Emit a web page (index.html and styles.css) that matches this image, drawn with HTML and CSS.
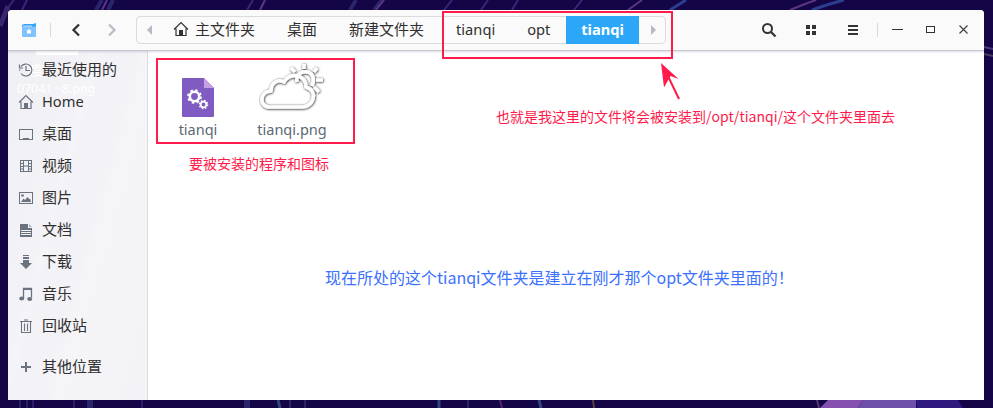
FILE: index.html
```html
<!DOCTYPE html>
<html lang="zh-CN">
<head>
<meta charset="utf-8">
<title>tianqi</title>
<link rel="stylesheet" href="styles.css">
</head>
<body>
<svg class="wallpaper" viewBox="0 0 993 408" aria-hidden="true">
  <rect width="993" height="408" fill="#140547"/>
  <g fill="none" stroke-width="2">
    <path d="M6 10L14 0M22 10L27 0M247 10L253 0M444 10L452 0M481 10L488 0M574 10L582 0M512 10L518 0" stroke="#3c2676"/>
    <path d="M96 10L102 0M108 10L113 0M374 10L382 0M350 10L356 0" stroke="#29266e" stroke-width="4"/>
    <path d="M102 10L107 0M260 10L265 0M376 10L384 0M628 10L642 0M790 10Q804 4 816 0" stroke="#5d3587"/>
    <path d="M670 10L686 0M812 10Q828 4 844 0" stroke="#2b3d8d" stroke-width="3"/>
    <path d="M0 26L8 6" stroke="#38236c" stroke-width="5"/>
    <path d="M984 47L993 49" stroke="#493a78"/><path d="M984 54L993 56" stroke="#493a60"/>
    <path d="M20 400V408M27 400V408M33 400V408M74 400V408M142 400V408" stroke="#2b1d69"/>
    <path d="M90 400V408M247 400V408" stroke="#2a2469" stroke-width="6"/>
    <path d="M278 400L280 408M439 400V408M539 400L541 408" stroke="#324581" stroke-width="3"/>
    <path d="M290 400V408M305 400V408M468 400V408" stroke="#2b2163"/>
    <path d="M500 400L502 408" stroke="#542567"/><path d="M593 400L594 408" stroke="#59413c"/>
    <path d="M817 400L819 408" stroke="#54366f"/>
  </g>
  <path d="M828 400H863L858 408H820Z" fill="#8650b1"/>
  <path d="M863 400H916V408H858Z" fill="#6d50aa"/>
  <path d="M916 400H958L963 408H917Z" fill="#2e1a7e"/>
</svg>

<main class="window">
  <header class="titlebar">
    <svg class="app-icon" viewBox="0 0 16 16"><path d="M1 3L3 2H12L15 1V5H1Z" fill="#32a4f4"/><path d="M2 3.500H11V5H2Z" fill="#b5deff"/><rect x="1" y="4.500" width="14" height="10.500" rx="1" fill="#7fc2ff"/><path d="M8 7L10.500 9H10V11.500H6V9H5.500Z" fill="#fff"/></svg>
    <i class="divider"></i>
    <svg class="nav-icon back" viewBox="0 0 12 14"><path d="M9 1.500L3.500 7L9 12.500"/></svg>
    <svg class="nav-icon forward" viewBox="0 0 12 14"><path d="M3 1.500L8.500 7L3 12.500"/></svg>
    <nav class="pathbar">
      <svg class="path-arrow" viewBox="0 0 6 10"><path d="M5 0V10L0 5Z"/></svg>
      <a class="crumb home"><svg viewBox="0 0 16 16"><path d="M1 8.500L8 1.500L15 8.500M3 7.500V14.500H13V7.500" fill="none" stroke="#333" stroke-width="1.200"/><path d="M6 9H10V14H6Z" fill="#333"/></svg>主文件夹</a>
      <a class="crumb desk">桌面</a>
      <a class="crumb fresh">新建文件夹</a>
      <a class="crumb first">tianqi</a>
      <a class="crumb opt">opt</a>
      <a class="crumb active">tianqi</a>
      <svg class="path-arrow right" viewBox="0 0 6 10"><path d="M1 0V10L6 5Z"/></svg>
    </nav>
    <div class="controls">
      <svg viewBox="0 0 16 16"><circle cx="6.500" cy="6.500" r="4.500" fill="none" stroke="#333" stroke-width="2"/><path d="M10 10L14.500 14.500" stroke="#333" stroke-width="2.300"/></svg>
      <svg viewBox="0 0 16 16" fill="#333"><path d="M3 3H7V7H3ZM9 3H13V7H9ZM3 9H7V13H3ZM9 9H13V13H9Z"/></svg>
      <svg viewBox="0 0 16 16" fill="#333"><path d="M3 3H13V5H3ZM3 7H13V9H3ZM3 11H13V13H3Z"/></svg>
    </div>
    <i class="divider end"></i>
    <div class="window-buttons">
      <svg viewBox="0 0 12 12"><path d="M1 5.500H12" stroke="#333"/></svg>
      <svg viewBox="0 0 12 12"><rect x="2.500" y="2.500" width="8" height="6" fill="none" stroke="#333"/></svg>
      <svg viewBox="0 0 12 12"><path d="M2.500 1.500L10.500 9.500M10.500 1.500L2.500 9.500" stroke="#444" stroke-width="1.200"/></svg>
    </div>
  </header>
  <div class="body">
    <aside class="sidebar">
      <div class="ghost" aria-hidden="true"><i></i><b>度</b><span>07041···8.png</span></div>
      <a class="place"><svg viewBox="0 0 16 16"><path d="M3 4.500A6 6 0 1 1 3 11.500M1.500 2.500V6H5" fill="none" stroke="#6b747e" stroke-width="1.200"/><path d="M8 4V8.500H12" fill="none" stroke="#6b747e" stroke-width="1.200"/><path d="M1 8h1.500" stroke="#6b747e"/></svg>最近使用的</a>
      <a class="place"><svg viewBox="0 0 16 16"><path d="M1 8.500L8 1.500L15 8.500M3 7.500V14.500H13V7.500" fill="none" stroke="#6b747e" stroke-width="1.200"/><path d="M6 9H10V14H6Z" fill="#6b747e"/></svg><span class="latin">Home</span></a>
      <a class="place"><svg viewBox="0 0 16 16"><rect x="1.500" y="3.500" width="13" height="10" fill="none" stroke="#6b747e"/><path d="M5 12H11V13H5Z" fill="#6b747e"/></svg>桌面</a>
      <a class="place"><svg viewBox="0 0 16 16"><path d="M2.500 2V14M5.500 2V14M10.500 2V14M13.500 2V14M2 2.500H14M5 8H11M2 13.500H14M2 5.500H5M2 8.500H5M2 11H5M11 5.500H14M11 8.500H14M11 11H14" fill="none" stroke="#6b747e"/></svg>视频</a>
      <a class="place"><svg viewBox="0 0 16 16"><rect x="1.500" y="2.500" width="13" height="11" fill="none" stroke="#6b747e"/><circle cx="4.500" cy="5.500" r="1.300" fill="#6b747e"/><path d="M3 12L5.500 8.500L7 10L9.500 7L11 9L12 8.500L13 12Z" fill="#6b747e"/></svg>图片</a>
      <a class="place"><svg viewBox="0 0 16 16"><path d="M2 2H10V6H14V15H2Z" fill="#6b747e"/><path d="M11 2L14 5H11Z" fill="#aab0b6"/><path d="M3 8.500H13M3 10.500H13M3 12.500H13" stroke="#f3f2f6"/></svg>文档</a>
      <a class="place"><svg viewBox="0 0 16 16"><path d="M5 1H11V2H5ZM5 3H11V5H5ZM5 6H11V9H14L8 15L2 9H5Z" fill="#6b747e"/></svg>下载</a>
      <a class="place"><svg viewBox="0 0 16 16"><path d="M5.500 12V2.500H13.500V11.500" fill="none" stroke="#6b747e" stroke-width="1.300"/><path d="M5 2H14V4H5Z" fill="#6b747e"/><ellipse cx="3.700" cy="12.500" rx="2.500" ry="1.900" fill="#6b747e"/><ellipse cx="11.700" cy="13" rx="2.500" ry="1.900" fill="#6b747e"/></svg>音乐</a>
      <a class="place"><svg viewBox="0 0 16 16"><path d="M2 3.500H14M6 2H10M3.500 4V14.500H12.500V4M6.500 5.500V13M9.500 5.500V13" fill="none" stroke="#6b747e" stroke-width="1.100"/></svg>回收站</a>
      <a class="place other"><svg viewBox="0 0 16 16"><path d="M3 8H13M8 3V13" stroke="#6b747e" stroke-width="2"/></svg>其他位置</a>
    </aside>
    <section class="files">
      <figure class="file program">
        <svg viewBox="0 0 32 39"><path d="M1 0H22L32 10V38Q32 39 31 39H1Q0 39 0 38V1Q0 0 1 0Z" fill="#7f5bc2"/><path d="M22 0L32 10H22Z" fill="#c79fe4"/><g fill="none" stroke="#fff"><circle cx="12.500" cy="18.500" r="4.700" stroke-width="2.600"/><circle cx="12.500" cy="18.500" r="6.500" stroke-width="1.700" stroke-dasharray="2.550 2.555"/><circle cx="21.500" cy="26.500" r="2.800" stroke-width="1.800"/><circle cx="21.500" cy="26.500" r="4.100" stroke-width="1.300" stroke-dasharray="1.610 1.610"/></g></svg>
        <figcaption>tianqi</figcaption>
      </figure>
      <figure class="file image">
        <svg viewBox="0 0 68 50">
          <defs><filter id="edge" x="-20%" y="-20%" width="140%" height="140%"><feDropShadow dx="0.400" dy="0.500" stdDeviation="0.900" flood-color="#000" flood-opacity="1"/></filter></defs>
          <g filter="url(#edge)" fill="none" stroke="#fff" stroke-width="3.600" stroke-linejoin="round">
            <path d="M38 20C36 9 51 6 54 15C55 19 54 22 53 24"/>
            <path d="M45 2V7M32 6L36 10M58 6L55 10M57 18H64M55 25L60 30"/>
            <path d="M11 45C0 45 0 30 12 29C12 20 20 17 25 20C30 10 47 12 47 25C60 29 54 45 44 45Z"/>
          </g>
        </svg>
        <figcaption>tianqi.png</figcaption>
      </figure>
    </section>
  </div>
</main>

<div class="mark mark-path"></div>
<div class="mark mark-files"></div>
<svg class="arrow" viewBox="0 0 24 42"><path d="M2 2L19.500 18L11.500 15L5 26.500Z" fill="#ff1b4b"/><path d="M7 11L20 38" stroke="#ff1b4b" stroke-width="2"/></svg>
<p class="note note-path">也就是我这里的文件将会被安装到/opt/tianqi/这个文件夹里面去</p>
<p class="note note-files">要被安装的程序和图标</p>
<p class="note note-folder">现在所处的这个tianqi文件夹是建立在刚才那个opt文件夹里面的！</p>
</body>
</html>
```
FILE: styles.css
```css
* { box-sizing: border-box; }
body {
  margin: 0;
  padding: 10px 9px 8px 8px;
  width: 993px;
  height: 408px;
  overflow: hidden;
  position: relative;
  background: #140547;
  color: #303030;
  font: 15px/20px "Noto Sans", "Noto Sans CJK SC", sans-serif;
}
svg { display: block; flex: none; }
.wallpaper { position: absolute; left: 0; top: 0; width: 993px; height: 408px; }
.window {
  position: relative;
  z-index: 0;
  height: 390px;
  display: flex;
  flex-direction: column;
  background: #fff;
  border-radius: 4px 4px 0 0;
  overflow: hidden;
}
.titlebar {
  height: 41px;
  flex: none;
  display: flex;
  align-items: center;
  padding: 0 15px 1px 13px;
  background: #fafafa;
  border-bottom: 1px solid #c7c6d2;
  box-shadow: 0 1px 2px rgba(60, 50, 90, .18);
  z-index: 1;
}
.app-icon { width: 16px; height: 16px; }
.divider { width: 1px; height: 14px; background: #d9d9dd; margin-left: 13px; }
.nav-icon { width: 12px; height: 14px; fill: none; stroke: #333; stroke-width: 2.3; }
.back { margin-left: 19px; }
.forward { margin-left: 24px; stroke: #b9bdc7; }
.pathbar {
  display: flex;
  align-items: center;
  width: 530px;
  height: 28px;
  margin-left: 18px;
  border: 1px solid #dcdcdf;
  border-radius: 4px;
}
.path-arrow { width: 6px; height: 10px; fill: #b6bac5; margin-left: 10px; }
.crumb { display: flex; align-items: center; height: 28px; padding-bottom: 1px; white-space: nowrap; }
.home { margin-left: 20px; gap: 6px; }
.home svg { width: 16px; height: 16px; }
.desk { margin-left: 32px; }
.fresh { margin-left: 32px; }
.first { margin-left: 32px; font-size: 14.67px; }
.opt { margin-left: 32px; font-size: 14.67px; }
.active {
  justify-content: center;
  width: 73px;
  margin-left: auto;
  background: #2ca7f8;
  color: #fff;
  font-size: 14.67px;
  font-weight: 700;
}
.path-arrow.right { margin: 0 9px 0 11px; }
.controls { display: flex; gap: 26px; margin-left: auto; }
.controls svg { width: 16px; height: 16px; }
.divider.end { margin-left: 16px; }
.window-buttons { display: flex; gap: 21px; margin-left: 13px; }
.window-buttons svg { width: 12px; height: 12px; }
.body { display: flex; flex: 1; min-height: 0; }
.sidebar {
  position: relative;
  width: 140px;
  flex: none;
  padding-top: 2px;
  border-right: 1px solid #dcdbe0;
  background: linear-gradient(105deg, #f0eff4, #f3f2f6 35%, #f5f4f8 38%, #f3f2f6 41%, #f3f2f6 55%, #f5f5f8 60%, #f3f2f6);
}
.place {
  position: relative;
  display: flex;
  align-items: center;
  height: 32px;
  padding-left: 10px;
  gap: 8px;
}
.place svg { width: 16px; height: 16px; margin-top: 2px; }
.latin { font-size: 14.67px; }
.other { margin-top: 9px; }
.ghost { position: absolute; left: 0; top: 0; color: #fff; font-size: 14px; }
.ghost i { position: absolute; left: 28px; top: 0; width: 42px; height: 4px; background: #fff; }
.ghost b { position: absolute; left: 22px; top: 9px; font-weight: 400; }
.ghost span { position: absolute; left: 9px; top: 28px; font-size: 12.5px; letter-spacing: -.1px; white-space: nowrap; }
.files { display: flex; align-items: flex-start; padding: 7px 0 0 27px; color: #5c6873; font-size: 14.5px; }
.file { margin: 0; display: flex; flex-direction: column; align-items: center; height: 81px; justify-content: flex-end; }
.program { width: 46px; }
.program svg { width: 32px; height: 39px; margin-bottom: 3px; }
.image { width: 76px; margin-left: 33px; }
.image svg { width: 68px; height: 50px; margin: 0 0 7px 2px; }
.program svg { margin-bottom: 2px; }
.mark, .arrow, .note { z-index: 1; }
.mark { position: absolute; border: 2px solid #ff1b4b; }
.mark-path { left: 442px; top: 11px; width: 231px; height: 48px; }
.mark-files { left: 156px; top: 58px; width: 199px; height: 86px; }
.arrow { position: absolute; left: 659px; top: 61px; width: 24px; height: 42px; }
.note {
  position: absolute;
  margin: 0;
  white-space: nowrap;
  color: #ff1b4b;
  font: 14px/20px "Noto Sans CJK SC", sans-serif;
}
.note-path { left: 496px; top: 106px; }
.note-files { left: 189px; top: 153px; }
.note-folder { left: 325px; top: 267px; color: #3c70ff; font-size: 16px; }
```
